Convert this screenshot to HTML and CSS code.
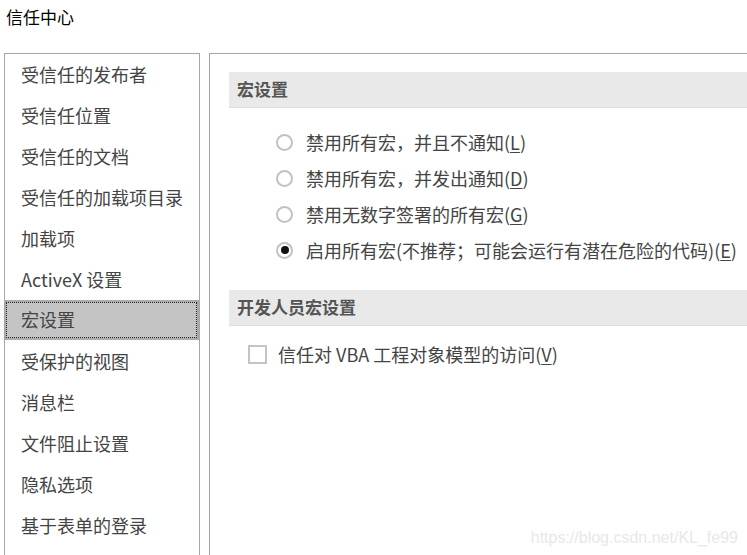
FILE: index.html
```html
<!DOCTYPE html>
<html lang="zh-CN">
<head>
<meta charset="utf-8">
<title>信任中心</title>
<link rel="stylesheet" href="styles.css">
</head>
<body>
<div class="window">
  <div class="title">信任中心</div>
  <div class="main">
    <ul class="nav">
      <li class="nav-item">受信任的发布者</li>
      <li class="nav-item">受信任位置</li>
      <li class="nav-item">受信任的文档</li>
      <li class="nav-item">受信任的加载项目录</li>
      <li class="nav-item">加载项</li>
      <li class="nav-item">ActiveX 设置</li>
      <li class="nav-item selected"><span class="focus">宏设置</span></li>
      <li class="nav-item">受保护的视图</li>
      <li class="nav-item">消息栏</li>
      <li class="nav-item">文件阻止设置</li>
      <li class="nav-item">隐私选项</li>
      <li class="nav-item">基于表单的登录</li>
    </ul>
    <div class="content">
      <div class="section-header">宏设置</div>
      <div class="radio-list">
        <div class="option"><span class="radio"></span><span class="label">禁用所有宏，并且不通知(<u>L</u>)</span></div>
        <div class="option"><span class="radio"></span><span class="label">禁用所有宏，并发出通知(<u>D</u>)</span></div>
        <div class="option"><span class="radio"></span><span class="label">禁用无数字签署的所有宏(<u>G</u>)</span></div>
        <div class="option"><span class="radio checked"></span><span class="label">启用所有宏(不推荐；可能会运行有潜在危险的代码)(<u>E</u>)</span></div>
      </div>
      <div class="section-header second">开发人员宏设置</div>
      <div class="check-row"><span class="checkbox"></span><span class="label">信任对 VBA 工程对象模型的访问(<u>V</u>)</span></div>
    </div>
  </div>
  <div class="watermark">https://blog.csdn.net/KL_fe99</div>
</div>
</body>
</html>
```
FILE: styles.css
```css
html, body {
  margin: 0;
  padding: 0;
  background: #ffffff;
}
body {
  font-family: "Noto Sans CJK SC", "Noto Sans", sans-serif;
  color: #444444;
  width: 747px;
  height: 555px;
  overflow: hidden;
}
.window {
  position: relative;
  height: 555px;
}
.title {
  height: 36px;
  line-height: 34px;
  padding-left: 6px;
  font-size: 17px;
  color: #000;
}
.main {
  display: flex;
  margin-top: 17px;
  padding-left: 4px;
  gap: 9px;
}
.nav {
  list-style: none;
  margin: 0;
  padding: 0;
  width: 194px;
  height: 501px;
  border: 1px solid #a6a6a6;
  border-bottom: none;
  flex: none;
  overflow: hidden;
}
.nav-item {
  height: 41px;
  display: flex;
  align-items: center;
  padding-left: 16px;
  padding-bottom: 2px;
  font-size: 18px;
  line-height: 24px;
  box-sizing: border-box;
  white-space: nowrap;
}
.nav-item.selected {
  background: #c4c4c4;
  border: 2px solid #aaaaaa;
  border-left-width: 1px;
  padding-left: 0;
  padding-bottom: 0;
  height: 40px;
  margin-bottom: 1px;
}
.focus {
  display: flex;
  align-items: center;
  width: 100%;
  height: 100%;
  box-sizing: border-box;
  border: 1px dotted #222;
  padding-left: 14px;
  padding-bottom: 2px;
}
.content {
  flex: 1;
  height: 483px;
  border: 1px solid #a6a6a6;
  border-right: none;
  border-bottom: none;
  padding: 18px 0 0 19px;
}
.section-header {
  border-bottom: 1px solid #dcdcdc;
  background: #e9e9e9;
  display: flex;
  align-items: center;
  padding-left: 8px;
  padding-bottom: 2px;
  box-sizing: content-box;
  height: 33px;
  font-size: 17px;
  font-weight: bold;
  color: #555555;
}
.section-header.second {
  margin-top: 22px;
}
.radio-list {
  padding-top: 16px;
}
.option {
  height: 36px;
  display: flex;
  align-items: center;
  padding-left: 47px;
  font-size: 18px;
  white-space: nowrap;
}
.radio {
  width: 13px;
  height: 13px;
  border: 2px solid #c2c2c2;
  border-radius: 50%;
  margin-right: 13px;
  flex: none;
  position: relative;
  background: #fff;
}
.radio.checked::after {
  content: "";
  position: absolute;
  left: 2.5px;
  top: 2.5px;
  width: 8px;
  height: 8px;
  border-radius: 50%;
  background: #111;
}
.label u {
  text-decoration-thickness: 1px;
  text-underline-offset: 2px;
}
.check-row {
  height: 36px;
  margin-top: 10px;
  display: flex;
  align-items: center;
  padding-left: 19px;
  font-size: 18px;
  white-space: nowrap;
}
.checkbox {
  width: 15px;
  height: 15px;
  border: 2px solid #c4c4c4;
  margin-right: 11px;
  flex: none;
}
.watermark {
  position: absolute;
  right: 9px;
  bottom: 8px;
  font-family: "Liberation Sans", Arial, sans-serif;
  font-size: 16px;
  color: #e8e8e8;
}
```
